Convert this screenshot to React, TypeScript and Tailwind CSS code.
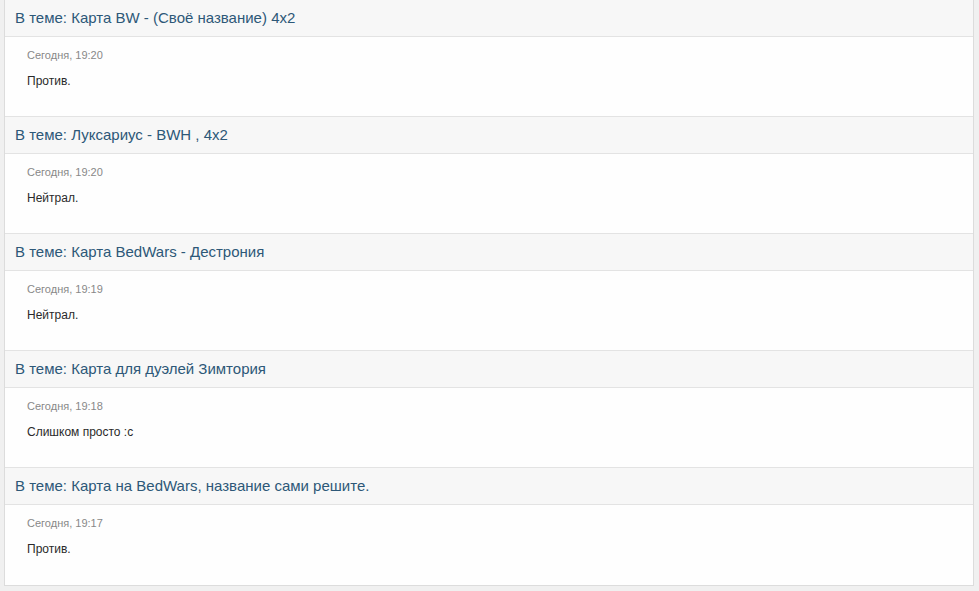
import React from "react";

const items = [
  { title: "В теме: Карта BW - (Своё название) 4x2", date: "Сегодня, 19:20", text: "Против." },
  { title: "В теме: Луксариус - BWH , 4x2", date: "Сегодня, 19:20", text: "Нейтрал." },
  { title: "В теме: Карта BedWars - Дестрония", date: "Сегодня, 19:19", text: "Нейтрал." },
  { title: "В теме: Карта для дуэлей Зимтория", date: "Сегодня, 19:18", text: "Слишком просто :c" },
  { title: "В теме: Карта на BedWars, название сами решите.", date: "Сегодня, 19:17", text: "Против." },
];

export default function App() {
  return (
    <div
      className="w-[979px] h-[591px] bg-[#f0f0f0] overflow-hidden"
      style={{ fontFamily: '"Liberation Sans", Arial, sans-serif' }}
    >
      <div className="ml-[4px] w-[970px] border-x border-b border-[#dcdcdc] bg-white">
        {items.map((it, i) => (
          <div key={i}>
            <div className="h-[37px] bg-[#f7f7f7] border-b border-[#e3e3e3] pl-[10px] flex items-center">
              <span className="text-[15px] leading-[18px] text-[#2d5878]">{it.title}</span>
            </div>
            <div className={"h-[80px] bg-[#fefefe] pl-[22px] pt-[11px]" + (i < items.length - 1 ? " border-b border-[#e3e3e3]" : "")}>
              <div className="text-[11px] leading-[14px] text-[#888888]">{it.date}</div>
              <div className="mt-[11px] text-[12px] leading-[16px] text-[#2a2a2a]">{it.text}</div>
            </div>
          </div>
        ))}
      </div>
    </div>
  );
}
